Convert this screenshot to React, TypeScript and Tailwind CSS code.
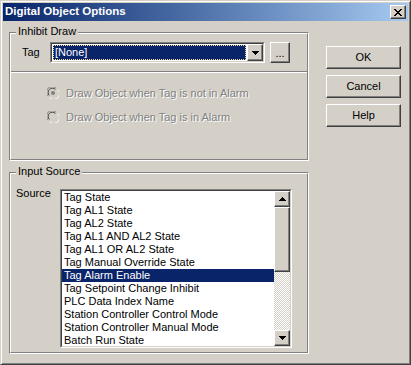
import React from "react";

const ITEMS = [
  "Tag State",
  "Tag AL1 State",
  "Tag AL2 State",
  "Tag AL1 AND AL2 State",
  "Tag AL1 OR AL2 State",
  "Tag Manual Override State",
  "Tag Alarm Enable",
  "Tag Setpoint Change Inhibit",
  "PLC Data Index Name",
  "Station Controller Control Mode",
  "Station Controller Manual Mode",
  "Batch Run State",
];

const raised =
  "border border-t-white border-l-white border-r-[#404040] border-b-[#404040] shadow-[inset_-1px_-1px_#808080]";

function Group({ label, className, children }: { label: string; className: string; children: React.ReactNode }) {
  return (
    <div className={`relative border border-t-[#808080] border-l-[#808080] border-r-white border-b-white ${className}`}>
      <span className="absolute left-[6px] -top-[8px] bg-[#d4d0c8] px-[2px] leading-[13px]">{label}</span>
      <div className="h-full border border-t-white border-l-white border-r-[#808080] border-b-[#808080]">{children}</div>
    </div>
  );
}

function Arrow({ up }: { up?: boolean }) {
  return (
    <svg width="7" height="4" viewBox="0 0 7 4" shapeRendering="crispEdges">
      {up ? <path d="M3 0h1v1h1v1h1v1h1v1H0V3h1V2h1V1h1z" fill="#000" /> : <path d="M0 0h7v1H6v1H5v1H4v1H3V3H2V2H1V1H0z" fill="#000" />}
    </svg>
  );
}

function Radio({ checked }: { checked?: boolean }) {
  return (
    <svg width="12" height="12" viewBox="0 0 12 12">
      <circle cx="6" cy="6" r="5.5" fill="#d4d0c8" />
      <path d="M1.2 9.2A5.3 5.3 0 0 1 9.2 1.2" fill="none" stroke="#808080" strokeWidth="1" />
      <path d="M2.4 8.4A3.9 3.9 0 0 1 8.4 2.4" fill="none" stroke="#404040" strokeWidth="1" />
      <path d="M10.8 2.8A5.3 5.3 0 0 1 2.8 10.8" fill="none" stroke="#ffffff" strokeWidth="1" />
      {checked && <circle cx="6" cy="6" r="2" fill="#808080" />}
    </svg>
  );
}

function Btn({ children }: { children: React.ReactNode }) {
  return <div className={`w-[75px] h-[23px] flex items-center justify-center ${raised}`}>{children}</div>;
}

export default function App() {
  return (
    <div className="w-[411px] h-[365px] bg-[#d4d0c8] border border-t-[#d4d0c8] border-l-[#d4d0c8] border-r-[#404040] border-b-[#404040] shadow-[inset_1px_1px_#fff,inset_-1px_-1px_#808080] p-[2px] text-[11px] text-black font-['Liberation_Sans',sans-serif] overflow-hidden">
      {/* Title bar */}
      <div className="h-[18px] flex items-center justify-between pl-[2px] pr-[2px] bg-linear-to-r from-[#0a246a] to-[#a6caf0]">
        <span className="text-white font-bold text-[11.5px]">Digital Object Options</span>
        <div className={`w-[16px] h-[14px] flex items-center justify-center ${raised} bg-[#d4d0c8]`}>
          <svg width="8" height="7" viewBox="0 0 8 7" shapeRendering="crispEdges">
            <path d="M0 0h2v1h1v1h2V1h1V0h2v1H7v1H6v1H5v1h1v1h1v1h1v1H6V6H5V5H3v1H2v1H0V6h1V5h1V4h1V3H2V2H1V1H0z" fill="#000" />
          </svg>
        </div>
      </div>

      {/* Client */}
      <div className="flex pl-[6px] pt-[11px]">
        <div className="w-[300px] flex flex-col gap-[11px]">
          <Group label="Inhibit Draw" className="h-[129px]">
            <div className="flex items-center pl-[11px] pt-[8px]">
              <span className="w-[28px]">Tag</span>
              <div className="w-[215px] h-[21px] border border-t-[#808080] border-l-[#808080] border-r-white border-b-white">
                <div className="h-full flex border border-t-[#404040] border-l-[#404040] border-r-[#d4d0c8] border-b-[#d4d0c8] bg-white">
                  <div className="flex-1 p-[1px]">
                    <div className="h-full bg-[#0a246a] text-white border border-dotted border-[#f5db95] leading-[13px] pl-[1px]">[None]</div>
                  </div>
                  <div className={`w-[16px] flex items-center justify-center bg-[#d4d0c8] ${raised}`}>
                    <Arrow />
                  </div>
                </div>
              </div>
              <div className={`ml-[5px] w-[20px] h-[21px] flex items-end justify-center pb-[3px] leading-none ${raised}`}>...</div>
            </div>
            <div className="mt-[8px] border-t border-t-[#808080] border-b border-b-white" />
            <div className="flex flex-col gap-[12px] pl-[36px] pt-[14px] text-[#808080] [text-shadow:1px_1px_0_#fff]">
              <div className="flex items-center gap-[7px] h-[12px]">
                <Radio checked />
                <span>Draw Object when Tag is not in Alarm</span>
              </div>
              <div className="flex items-center gap-[7px] h-[12px]">
                <Radio />
                <span>Draw Object when Tag is in Alarm</span>
              </div>
            </div>
          </Group>

          <Group label="Input Source" className="h-[182px]">
            <div className="flex items-start pl-[5px] pt-[15px]">
              <span className="w-[44px] leading-[13px] mt-[-2px]">Source</span>
              <div className="w-[232px] h-[159px] border border-t-[#808080] border-l-[#808080] border-r-white border-b-white">
                <div className="h-full flex border border-t-[#404040] border-l-[#404040] border-r-[#d4d0c8] border-b-[#d4d0c8] bg-white">
                  <div className="flex-1 flex flex-col">
                    {ITEMS.map((t, i) => (
                      <div key={t} className={`h-[13px] leading-[13px] pl-[2px] whitespace-nowrap ${i === 6 ? "bg-[#0a246a] text-white" : ""}`}>
                        {t}
                      </div>
                    ))}
                  </div>
                  <div className="w-[16px] flex flex-col">
                    <div className={`h-[16px] flex items-center justify-center bg-[#d4d0c8] ${raised}`}>
                      <Arrow up />
                    </div>
                    <div className={`h-[65px] bg-[#d4d0c8] ${raised}`} />
                    <div className="flex-1 bg-[image:repeating-conic-gradient(#d4d0c8_0%_25%,#ffffff_0%_50%)] bg-[length:2px_2px]" />
                    <div className={`h-[16px] flex items-center justify-center bg-[#d4d0c8] ${raised}`}>
                      <Arrow />
                    </div>
                  </div>
                </div>
              </div>
            </div>
          </Group>
        </div>

        <div className="ml-[17px] pt-[14px] flex flex-col gap-[6px]">
          <Btn>OK</Btn>
          <Btn>Cancel</Btn>
          <Btn>Help</Btn>
        </div>
      </div>
    </div>
  );
}
